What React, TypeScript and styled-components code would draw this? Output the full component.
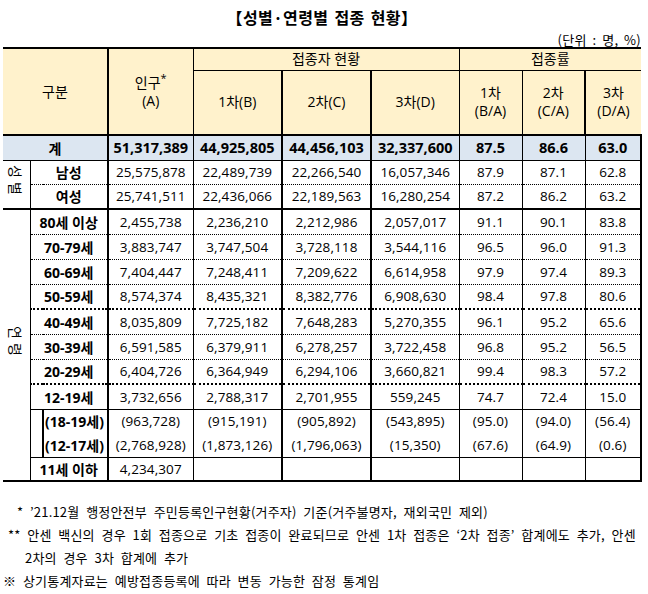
import React from "react";
import styled, { createGlobalStyle } from "styled-components";

type Line = "none" | "thin" | "thick" | "dot" | "dotThick";

const line = (l?: Line) =>
  l === "thin"
    ? "1px solid #000"
    : l === "thick"
    ? "2px solid #000"
    : l === "dot"
    ? "1px dotted #000"
    : l === "dotThick"
    ? "2px dotted #000"
    : "none";

const GlobalStyle = createGlobalStyle`
  html, body { margin: 0; padding: 0; background: #fff; }
  body { font-family: "Open Sans", "Noto Sans CJK KR", sans-serif; color: #000; }
`;

const Page = styled.div`
  width: 648px;
  height: 594px;
  overflow: hidden;
  box-sizing: border-box;
  padding: 0 7px 0 3px;
`;

const Title = styled.h1`
  margin: 0;
  height: 32px;
  line-height: 34px;
  text-align: center;
  font-family: "Noto Sans CJK KR", sans-serif;
  font-size: 16px;
  font-weight: 700;
  letter-spacing: 0.4px;
  word-spacing: 2px;
`;

const Unit = styled.div`
  height: 15px;
  line-height: 15px;
  text-align: right;
  font-family: "Noto Sans CJK KR", sans-serif;
  font-size: 13px;
  letter-spacing: 0.3px;
  word-spacing: 2.5px;
`;

const Table = styled.table`
  border-collapse: collapse;
  table-layout: fixed;
  width: 638px;
  border-top: 2px solid #000;
`;

const Row = styled.tr<{ $h: number }>`
  height: ${(p) => p.$h}px;
`;

const HeadCell = styled.th<{ $b?: Line; $r?: Line }>`
  padding: 0;
  background: #fff2cc;
  font-weight: 400;
  font-size: 14px;
  line-height: 18px;
  text-align: center;
  vertical-align: middle;
  white-space: nowrap;
  border-bottom: ${(p) => line(p.$b)};
  border-right: ${(p) => line(p.$r)};
`;

const Sup = styled.sup`
  font-size: 11px;
  vertical-align: 6px;
  line-height: 0;
`;

const SideCell = styled.td<{ $b?: Line }>`
  padding: 0;
  text-align: center;
  vertical-align: middle;
  border-right: 1px solid #000;
  border-bottom: ${(p) => line(p.$b)};
`;

const SideText = styled.span`
  display: inline-block;
  writing-mode: vertical-rl;
  text-orientation: sideways;
  font-family: "Noto Sans CJK KR", sans-serif;
  font-size: 14px;
  letter-spacing: 4px;
`;

const LabelCell = styled.td<{ $b?: Line; $total?: boolean; $left?: boolean }>`
  padding: ${(p) => (p.$left ? "0 0 0 1px" : "0")};
  text-align: ${(p) => (p.$left ? "left" : "center")};
  vertical-align: middle;
  white-space: nowrap;
  font-weight: 700;
  font-size: 14px;
  background: ${(p) => (p.$total ? "#dce6f1" : "transparent")};
  border-right: 2px solid #000;
  border-bottom: ${(p) => line(p.$b)};
`;

const GapCell = styled.td`
  padding: 0;
  border-right: 2px solid #000;
  border-bottom: 1px solid #000;
`;

const NumCell = styled.td<{ $b?: Line; $r?: Line; $total?: boolean }>`
  padding: 0;
  text-align: center;
  vertical-align: middle;
  white-space: nowrap;
  font-size: ${(p) => (p.$total ? 14.5 : 13.5)}px;
  font-weight: ${(p) => (p.$total ? 700 : 400)};
  letter-spacing: ${(p) => (p.$total ? "0" : "0.1px")};
  background: ${(p) => (p.$total ? "#dce6f1" : "transparent")};
  border-right: ${(p) => line(p.$r)};
  border-bottom: ${(p) => line(p.$b)};
`;

const Notes = styled.div`
  margin-top: 18px;
  font-family: "Noto Sans CJK KR", sans-serif;
  font-size: 13px;
  line-height: 23px;
  letter-spacing: 0.2px;
  word-spacing: 3.6px;
  white-space: nowrap;
`;

const Note = styled.p<{ $indent: number }>`
  margin: 0;
  padding-left: ${(p) => p.$indent}px;
`;

const valueRights: Line[] = ["thin", "thick", "thick", "thin", "thin", "thin", "thick", "none"];

const Values = ({ vals, b, total }: { vals: string[]; b: Line; total?: boolean }) => (
  <>
    {valueRights.map((r, i) => (
      <NumCell key={i} $r={r} $b={b} $total={total}>
        {vals[i] ?? ""}
      </NumCell>
    ))}
  </>
);

const ages: { label: string; b: Line; vals: string[] }[] = [
  { label: "80세 이상", b: "dot", vals: ["2,455,738", "2,236,210", "2,212,986", "2,057,017", "91.1", "90.1", "83.8"] },
  { label: "70-79세", b: "dot", vals: ["3,883,747", "3,747,504", "3,728,118", "3,544,116", "96.5", "96.0", "91.3"] },
  { label: "60-69세", b: "dot", vals: ["7,404,447", "7,248,411", "7,209,622", "6,614,958", "97.9", "97.4", "89.3"] },
  { label: "50-59세", b: "dotThick", vals: ["8,574,374", "8,435,321", "8,382,776", "6,908,630", "98.4", "97.8", "80.6"] },
  { label: "40-49세", b: "dot", vals: ["8,035,809", "7,725,182", "7,648,283", "5,270,355", "96.1", "95.2", "65.6"] },
  { label: "30-39세", b: "dot", vals: ["6,591,585", "6,379,911", "6,278,257", "3,722,458", "96.8", "95.2", "56.5"] },
  { label: "20-29세", b: "dotThick", vals: ["6,404,726", "6,364,949", "6,294,106", "3,660,821", "99.4", "98.3", "57.2"] },
  { label: "12-19세", b: "thin", vals: ["3,732,656", "2,788,317", "2,701,955", "559,245", "74.7", "72.4", "15.0"] },
];

export default function App() {
  return (
    <Page>
      <GlobalStyle />
      <Title>【성별·연령별 접종 현황】</Title>
      <Unit>(단위 : 명, %)</Unit>
      <Table>
        <colgroup>
          <col style={{ width: 27 }} />
          <col style={{ width: 13 }} />
          <col style={{ width: 65 }} />
          <col style={{ width: 85 }} />
          <col style={{ width: 89 }} />
          <col style={{ width: 89 }} />
          <col style={{ width: 88 }} />
          <col style={{ width: 63 }} />
          <col style={{ width: 63 }} />
          <col style={{ width: 56 }} />
        </colgroup>
        <thead>
          <Row $h={22}>
            <HeadCell colSpan={3} rowSpan={2} $r="thick" $b="thick">
              구분
            </HeadCell>
            <HeadCell rowSpan={2} $r="thin" $b="thick">
              인구<Sup>*</Sup>
              <br />
              (A)
            </HeadCell>
            <HeadCell colSpan={3} $r="thin" $b="thin">
              접종자 현황
            </HeadCell>
            <HeadCell colSpan={3} $b="thin">
              접종률
            </HeadCell>
          </Row>
          <Row $h={65}>
            <HeadCell $r="thick" $b="thick">1차(B)</HeadCell>
            <HeadCell $r="thick" $b="thick">2차(C)</HeadCell>
            <HeadCell $r="thin" $b="thick">3차(D)</HeadCell>
            <HeadCell $r="thin" $b="thick">
              1차
              <br />
              (B/A)
            </HeadCell>
            <HeadCell $r="thick" $b="thick">
              2차
              <br />
              (C/A)
            </HeadCell>
            <HeadCell $b="thick">
              3차
              <br />
              (D/A)
            </HeadCell>
          </Row>
        </thead>
        <tbody>
          <Row $h={25}>
            <LabelCell colSpan={3} $b="thin" $total>
              계
            </LabelCell>
            <Values total b="thin" vals={["51,317,389", "44,925,805", "44,456,103", "32,337,600", "87.5", "86.6", "63.0"]} />
          </Row>
          <Row $h={24}>
            <SideCell rowSpan={2} $b="thick">
              <SideText>성별</SideText>
            </SideCell>
            <LabelCell colSpan={2} $b="dot">
              남성
            </LabelCell>
            <Values b="dot" vals={["25,575,878", "22,489,739", "22,266,540", "16,057,346", "87.9", "87.1", "62.8"]} />
          </Row>
          <Row $h={25}>
            <LabelCell colSpan={2} $b="thick">
              여성
            </LabelCell>
            <Values b="thick" vals={["25,741,511", "22,436,066", "22,189,563", "16,280,254", "87.2", "86.2", "63.2"]} />
          </Row>
          {ages.map((a, i) => (
            <Row $h={25} key={a.label}>
              {i === 0 && (
                <SideCell rowSpan={11} $b="thick">
                  <SideText>연령</SideText>
                </SideCell>
              )}
              <LabelCell colSpan={2} $b={a.b}>
                {a.label}
              </LabelCell>
              <Values b={a.b} vals={a.vals} />
            </Row>
          ))}
          <Row $h={24}>
            <GapCell rowSpan={2} />
            <LabelCell $left>(18-19세)</LabelCell>
            <Values b="none" vals={["(963,728)", "(915,191)", "(905,892)", "(543,895)", "(95.0)", "(94.0)", "(56.4)"]} />
          </Row>
          <Row $h={24}>
            <LabelCell $left $b="thin">
              (12-17세)
            </LabelCell>
            <Values b="thin" vals={["(2,768,928)", "(1,873,126)", "(1,796,063)", "(15,350)", "(67.6)", "(64.9)", "(0.6)"]} />
          </Row>
          <Row $h={24}>
            <LabelCell colSpan={2} $b="thick">
              11세 이하
            </LabelCell>
            <Values b="thick" vals={["4,234,307"]} />
          </Row>
        </tbody>
      </Table>
      <Notes>
        <Note $indent={14}>* ’21.12월 행정안전부 주민등록인구현황(거주자) 기준(거주불명자, 재외국민 제외)</Note>
        <Note $indent={5}>** 안센 백신의 경우 1회 접종으로 기초 접종이 완료되므로 안센 1차 접종은 ‘2차 접종’ 합계에도 추가, 안센</Note>
        <Note $indent={22}>2차의 경우 3차 합계에 추가</Note>
        <Note $indent={0}>※ 상기통계자료는 예방접종등록에 따라 변동 가능한 잠정 통계임</Note>
      </Notes>
    </Page>
  );
}
